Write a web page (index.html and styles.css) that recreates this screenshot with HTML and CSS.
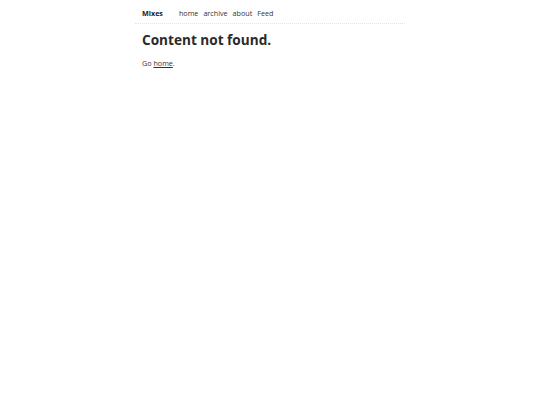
FILE: index.html
```html
<!DOCTYPE html>
<html>
<head>
<meta charset="utf-8">
<link rel="stylesheet" href="styles.css">
</head>
<body>
<div class="page">
  <header class="nav">
    <a class="brand" href="#">Mixes</a>
    <nav class="links">
      <a href="#">home</a>
      <a href="#">archive</a>
      <a href="#">about</a>
      <a href="#">Feed</a>
    </nav>
  </header>
  <main class="content">
    <h1>Content not found.</h1>
    <p>Go <a class="u" href="#">home</a>.</p>
  </main>
</div>
</body>
</html>
```
FILE: styles.css
```css
html, body { margin: 0; padding: 0; background: #fff; }
body { font-family: "Open Sans", sans-serif; color: #333; font-size: 7.2px; line-height: 10.5px; }
.page { width: 270px; margin: 0 auto; }
.nav { display: flex; align-items: center; padding: 7.5px 7px 4.5px; border-bottom: 1px dotted #e2e2e2; }
.brand { font-weight: 700; color: #222; text-decoration: none; margin-right: 16px; }
.links { display: flex; gap: 5px; }
.links a { color: #333; text-decoration: none; }
.content { padding: 0 7px; }
h1 { font-size: 13.6px; line-height: 16.8px; font-weight: 700; margin: 8px 0 10px; color: #2a2a2a; }
p { margin: 0; }
.u { color: #333; text-decoration: underline; }
```
